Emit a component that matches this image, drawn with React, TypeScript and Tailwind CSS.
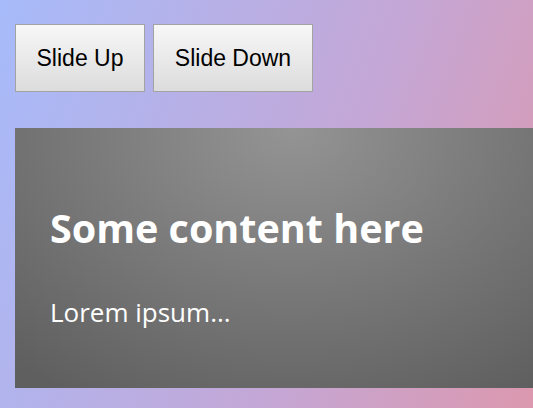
export default function App() {
  return (
    <div className="min-h-[408px] w-full overflow-hidden bg-[linear-gradient(110deg,#a7bbfa_0%,#c4a7d6_60%,#dc98ae_100%)] px-[15px] pt-[24px] pb-[20px]">
      {/* Controls */}
      <div className="flex gap-2">
        <button className="h-[68px] w-[130px] border border-[#a3a3a3] bg-[linear-gradient(#f7f7f7,#dcdcdc)] font-['Liberation_Sans',Arial,sans-serif] text-[23px] text-black">
          Slide Up
        </button>
        <button className="h-[68px] w-[160px] border border-[#a3a3a3] bg-[linear-gradient(#f7f7f7,#dcdcdc)] font-['Liberation_Sans',Arial,sans-serif] text-[23px] text-black">
          Slide Down
        </button>
      </div>

      {/* Sliding panel */}
      <div className="mt-[36px] h-[260px] w-[600px] bg-[radial-gradient(ellipse_70%_120%_at_46%_0%,#949494_0%,#7c7c7c_45%,#5f5f5f_100%)] px-[35px] pt-[75px] font-['Open_Sans','Noto_Sans',sans-serif] text-white">
        <h1 className="text-[39.5px] leading-[50px] font-bold">Some content here</h1>
        <p className="mt-[43px] text-[26px] leading-[32px]">Lorem ipsum...</p>
      </div>
    </div>
  );
}
